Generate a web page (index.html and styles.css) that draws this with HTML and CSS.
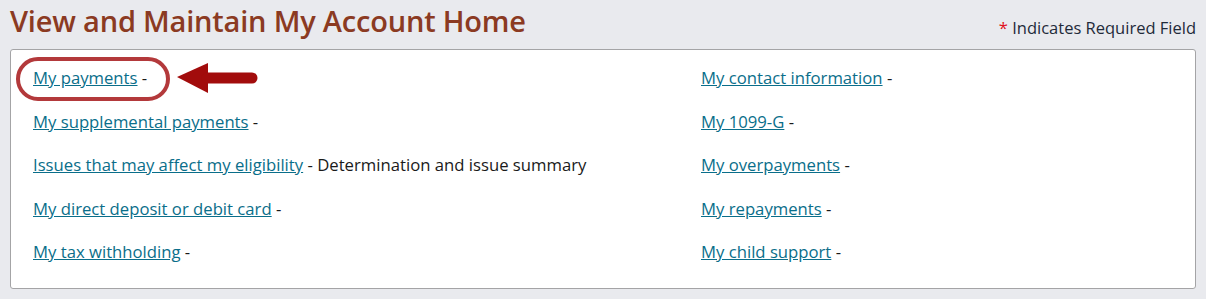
FILE: index.html
```html
<!DOCTYPE html>
<html>
<head>
<meta charset="utf-8">
<link rel="stylesheet" href="styles.css">
</head>
<body>
<div class="header">
  <h1 class="title">View and Maintain My Account Home</h1>
  <div class="req"><span class="star">*</span> Indicates Required Field</div>
</div>
<div class="box">
  <div class="col">
    <div class="row first"><a href="#">My payments</a> -
      <span class="oval"></span>
      <svg class="arrow" width="82" height="34" viewBox="0 0 82 34">
        <polygon points="0,14 31,0 31,30" fill="#a20c0c"/>
        <line x1="30" y1="15" x2="75" y2="15" stroke="#a20c0c" stroke-width="11" stroke-linecap="round"/>
      </svg>
    </div>
    <div class="row"><a href="#">My supplemental payments</a> -</div>
    <div class="row"><a href="#">Issues that may affect my eligibility</a> - Determination and issue summary</div>
    <div class="row"><a href="#">My direct deposit or debit card</a> -</div>
    <div class="row"><a href="#">My tax withholding</a> -</div>
  </div>
  <div class="col">
    <div class="row"><a href="#">My contact information</a> -</div>
    <div class="row"><a href="#">My 1099-G</a> -</div>
    <div class="row"><a href="#">My overpayments</a> -</div>
    <div class="row"><a href="#">My repayments</a> -</div>
    <div class="row"><a href="#">My child support</a> -</div>
  </div>
</div>
</body>
</html>
```
FILE: styles.css
```css
html, body {
  margin: 0;
  padding: 0;
  background: #e9eaee;
  font-family: "Open Sans", "Noto Sans", sans-serif;
}
body {
  padding: 0 10px 0 10px;
  width: 1186px;
}
.header {
  display: flex;
  justify-content: space-between;
  align-items: flex-end;
  height: 44px;
}
.title {
  margin: 0;
  font-size: 29px;
  font-weight: 600;
  color: #8b3a22;
  line-height: 46px;
  letter-spacing: -0.2px;
}
.req {
  font-size: 16.5px;
  color: #1f2a3a;
  line-height: 16px;
  padding-bottom: 8px;
}
.star {
  color: #e0101a;
}
.box {
  margin-top: 5px;
  height: 240px;
  background: #fff;
  border: 1px solid #a4a4a6;
  border-radius: 3px;
  display: grid;
  grid-template-columns: 668px 1fr;
  padding: 13px 0 0 22px;
  box-sizing: border-box;
}
.col {
  display: flex;
  flex-direction: column;
}
.row {
  position: relative;
  font-size: 16.7px;
  color: #1a1a1a;
  height: 43.5px;
  line-height: 30px;
}
.row a {
  color: #0a6e8a;
  text-decoration: underline;
}
.oval {
  position: absolute;
  left: -17px;
  top: -6px;
  width: 146px;
  height: 36px;
  border: 4px solid #b3393b;
  border-radius: 22px;
}
.arrow {
  position: absolute;
  left: 144px;
  top: 0px;
}
```
